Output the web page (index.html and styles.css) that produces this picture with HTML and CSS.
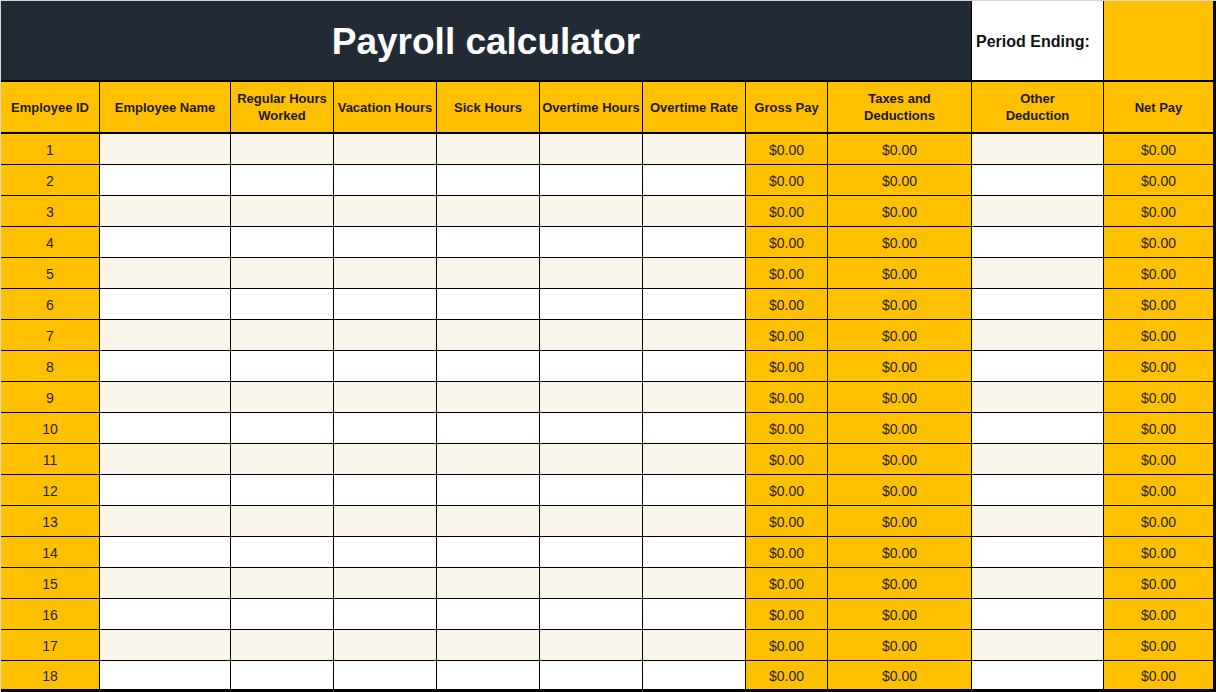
FILE: index.html
```html
<!DOCTYPE html>
<html lang="en">
<head>
<meta charset="utf-8">
<title>Payroll calculator</title>
<link rel="stylesheet" href="styles.css">
</head>
<body>
<div class="sheet">
  <div class="row">
    <div class="cell title">Payroll calculator</div>
    <div class="cell period">Period Ending:</div>
    <div class="cell period-value last"></div>
  </div>

  <div class="row">
    <div class="cell head">Employee ID</div>
    <div class="cell head">Employee Name</div>
    <div class="cell head">Regular Hours<br>Worked</div>
    <div class="cell head">Vacation Hours</div>
    <div class="cell head">Sick Hours</div>
    <div class="cell head">Overtime Hours</div>
    <div class="cell head">Overtime Rate</div>
    <div class="cell head">Gross Pay</div>
    <div class="cell head">Taxes and<br>Deductions</div>
    <div class="cell head">Other<br>Deduction</div>
    <div class="cell head last">Net Pay</div>
  </div>

  <div class="row odd"><div class="cell calc">1</div><div class="cell in"></div><div class="cell in"></div><div class="cell in"></div><div class="cell in"></div><div class="cell in"></div><div class="cell in"></div><div class="cell calc">$0.00</div><div class="cell calc">$0.00</div><div class="cell in"></div><div class="cell calc last">$0.00</div></div>
  <div class="row even"><div class="cell calc">2</div><div class="cell in"></div><div class="cell in"></div><div class="cell in"></div><div class="cell in"></div><div class="cell in"></div><div class="cell in"></div><div class="cell calc">$0.00</div><div class="cell calc">$0.00</div><div class="cell in"></div><div class="cell calc last">$0.00</div></div>
  <div class="row odd"><div class="cell calc">3</div><div class="cell in"></div><div class="cell in"></div><div class="cell in"></div><div class="cell in"></div><div class="cell in"></div><div class="cell in"></div><div class="cell calc">$0.00</div><div class="cell calc">$0.00</div><div class="cell in"></div><div class="cell calc last">$0.00</div></div>
  <div class="row even"><div class="cell calc">4</div><div class="cell in"></div><div class="cell in"></div><div class="cell in"></div><div class="cell in"></div><div class="cell in"></div><div class="cell in"></div><div class="cell calc">$0.00</div><div class="cell calc">$0.00</div><div class="cell in"></div><div class="cell calc last">$0.00</div></div>
  <div class="row odd"><div class="cell calc">5</div><div class="cell in"></div><div class="cell in"></div><div class="cell in"></div><div class="cell in"></div><div class="cell in"></div><div class="cell in"></div><div class="cell calc">$0.00</div><div class="cell calc">$0.00</div><div class="cell in"></div><div class="cell calc last">$0.00</div></div>
  <div class="row even"><div class="cell calc">6</div><div class="cell in"></div><div class="cell in"></div><div class="cell in"></div><div class="cell in"></div><div class="cell in"></div><div class="cell in"></div><div class="cell calc">$0.00</div><div class="cell calc">$0.00</div><div class="cell in"></div><div class="cell calc last">$0.00</div></div>
  <div class="row odd"><div class="cell calc">7</div><div class="cell in"></div><div class="cell in"></div><div class="cell in"></div><div class="cell in"></div><div class="cell in"></div><div class="cell in"></div><div class="cell calc">$0.00</div><div class="cell calc">$0.00</div><div class="cell in"></div><div class="cell calc last">$0.00</div></div>
  <div class="row even"><div class="cell calc">8</div><div class="cell in"></div><div class="cell in"></div><div class="cell in"></div><div class="cell in"></div><div class="cell in"></div><div class="cell in"></div><div class="cell calc">$0.00</div><div class="cell calc">$0.00</div><div class="cell in"></div><div class="cell calc last">$0.00</div></div>
  <div class="row odd"><div class="cell calc">9</div><div class="cell in"></div><div class="cell in"></div><div class="cell in"></div><div class="cell in"></div><div class="cell in"></div><div class="cell in"></div><div class="cell calc">$0.00</div><div class="cell calc">$0.00</div><div class="cell in"></div><div class="cell calc last">$0.00</div></div>
  <div class="row even"><div class="cell calc">10</div><div class="cell in"></div><div class="cell in"></div><div class="cell in"></div><div class="cell in"></div><div class="cell in"></div><div class="cell in"></div><div class="cell calc">$0.00</div><div class="cell calc">$0.00</div><div class="cell in"></div><div class="cell calc last">$0.00</div></div>
  <div class="row odd"><div class="cell calc">11</div><div class="cell in"></div><div class="cell in"></div><div class="cell in"></div><div class="cell in"></div><div class="cell in"></div><div class="cell in"></div><div class="cell calc">$0.00</div><div class="cell calc">$0.00</div><div class="cell in"></div><div class="cell calc last">$0.00</div></div>
  <div class="row even"><div class="cell calc">12</div><div class="cell in"></div><div class="cell in"></div><div class="cell in"></div><div class="cell in"></div><div class="cell in"></div><div class="cell in"></div><div class="cell calc">$0.00</div><div class="cell calc">$0.00</div><div class="cell in"></div><div class="cell calc last">$0.00</div></div>
  <div class="row odd"><div class="cell calc">13</div><div class="cell in"></div><div class="cell in"></div><div class="cell in"></div><div class="cell in"></div><div class="cell in"></div><div class="cell in"></div><div class="cell calc">$0.00</div><div class="cell calc">$0.00</div><div class="cell in"></div><div class="cell calc last">$0.00</div></div>
  <div class="row even"><div class="cell calc">14</div><div class="cell in"></div><div class="cell in"></div><div class="cell in"></div><div class="cell in"></div><div class="cell in"></div><div class="cell in"></div><div class="cell calc">$0.00</div><div class="cell calc">$0.00</div><div class="cell in"></div><div class="cell calc last">$0.00</div></div>
  <div class="row odd"><div class="cell calc">15</div><div class="cell in"></div><div class="cell in"></div><div class="cell in"></div><div class="cell in"></div><div class="cell in"></div><div class="cell in"></div><div class="cell calc">$0.00</div><div class="cell calc">$0.00</div><div class="cell in"></div><div class="cell calc last">$0.00</div></div>
  <div class="row even"><div class="cell calc">16</div><div class="cell in"></div><div class="cell in"></div><div class="cell in"></div><div class="cell in"></div><div class="cell in"></div><div class="cell in"></div><div class="cell calc">$0.00</div><div class="cell calc">$0.00</div><div class="cell in"></div><div class="cell calc last">$0.00</div></div>
  <div class="row odd"><div class="cell calc">17</div><div class="cell in"></div><div class="cell in"></div><div class="cell in"></div><div class="cell in"></div><div class="cell in"></div><div class="cell in"></div><div class="cell calc">$0.00</div><div class="cell calc">$0.00</div><div class="cell in"></div><div class="cell calc last">$0.00</div></div>
  <div class="row even final"><div class="cell calc">18</div><div class="cell in"></div><div class="cell in"></div><div class="cell in"></div><div class="cell in"></div><div class="cell in"></div><div class="cell in"></div><div class="cell calc">$0.00</div><div class="cell calc">$0.00</div><div class="cell in"></div><div class="cell calc last">$0.00</div></div>
</div>
</body>
</html>
```

FILE: styles.css
```css
* { box-sizing: border-box; }
html, body { margin: 0; padding: 0; background: #ffffff; }
body { font-family: "Liberation Sans", Arial, sans-serif; color: #1f1f1f; }
.sheet {
  width: 1216px;
  height: 692px;
  overflow: hidden;
  border-top: 1px solid #d6d6d6;
  border-left: 1px solid #d6d6d6;
  display: grid;
  grid-template-columns: 99px 131px 103px 103px 103px 103px 103px 82px 144px 132px 112px;
  grid-template-rows: 81px 52px repeat(17, 31px) 31px;
}
.row { display: contents; }
.cell {
  border-right: 1px solid #000;
  border-bottom: 1px solid #000;
  display: flex;
  align-items: center;
  justify-content: center;
  text-align: center;
  font-size: 14px;
  padding-top: 2px;
}
.cell.last { border-right-width: 3px; }
.title {
  grid-column: 1 / 10;
  background: #222b35;
  color: #ffffff;
  font-weight: bold;
  font-size: 37px;
  border-bottom-width: 2px;
  padding-top: 2px;
}
.period {
  background: #ffffff;
  font-weight: bold;
  font-size: 16px;
  justify-content: flex-start;
  padding: 2px 0 0 4px;
  border-bottom-width: 2px;
  color: #111;
}
.period-value {
  background: #ffc000;
  border-bottom-width: 2px;
}
.head {
  background: #ffc000;
  font-weight: bold;
  font-size: 13px;
  line-height: 17px;
  border-bottom-width: 2px;
  padding-top: 0;
  color: #1c1a14;
}
.calc { background: #ffc000; color: #2a2418; }
.odd .in { background: #faf5eb; }
.even .in { background: #ffffff; }
.final .cell { border-bottom-width: 3px; padding-top: 2px; }
```
